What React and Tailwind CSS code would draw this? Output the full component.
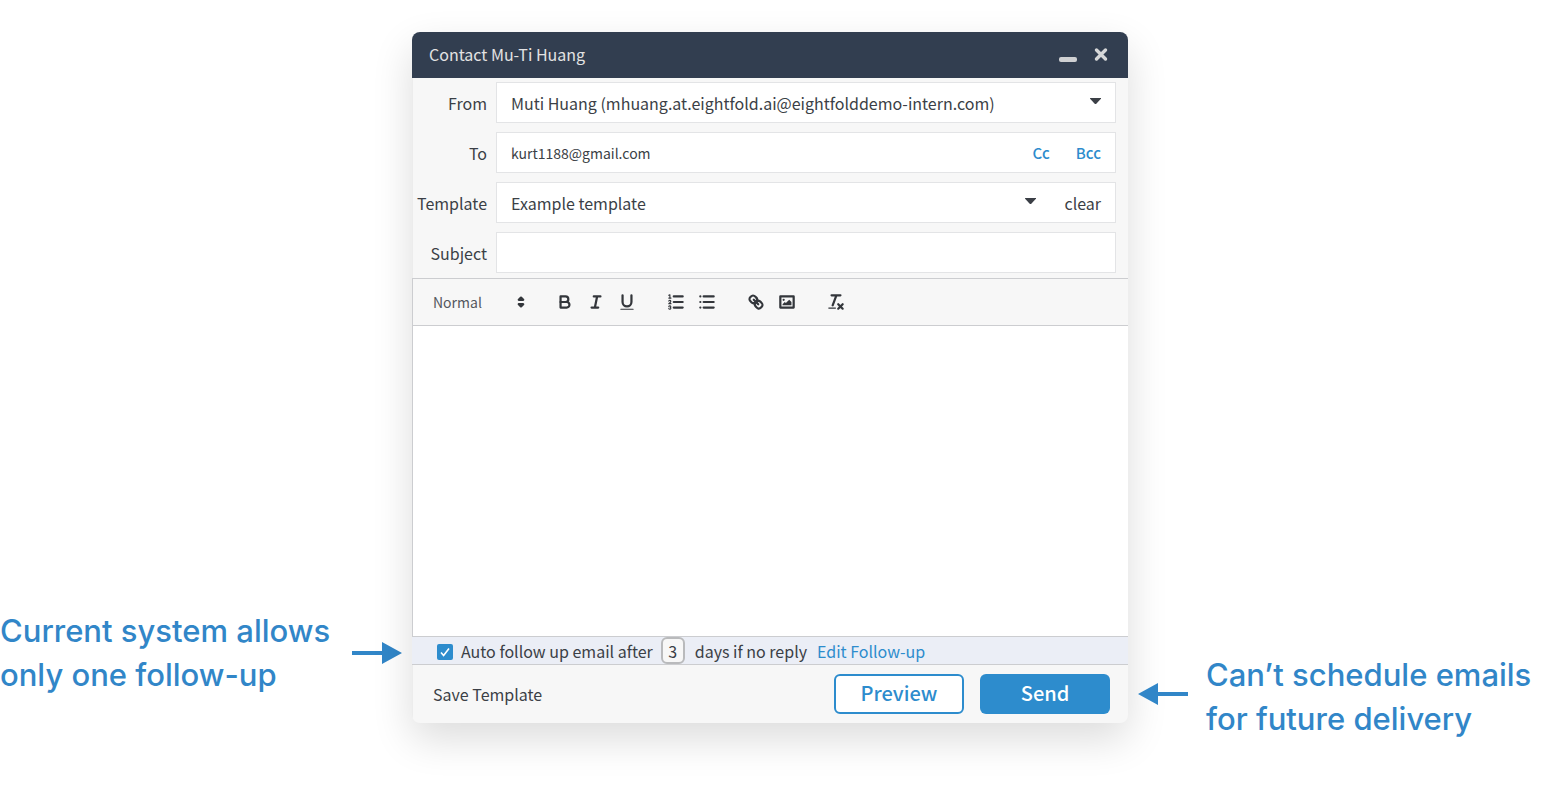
const toolbarGroups = [
  ['Bold', 'Italic', 'Underline'],
  ['Ordered list', 'Bullet list'],
  ['Link', 'Image'],
  ['Clear formatting'],
]

const iconShapes = {
  Bold: (
    <>
      <path d="M5,4H9.5A2.5,2.5,0,0,1,12,6.5v0A2.5,2.5,0,0,1,9.5,9H5V4Z" />
      <path d="M5,9h5.5A2.5,2.5,0,0,1,13,11.5v0A2.5,2.5,0,0,1,10.5,14H5V9Z" />
    </>
  ),
  Italic: <path d="M7 4h6M5 14h6M8 14l2-10" />,
  Underline: (
    <>
      <path d="M5,3V9a4,4,0,0,0,8,0V3" />
      <rect x="3" y="15" width="12" height="1" rx="0.5" fill="currentColor" stroke="none" />
    </>
  ),
  'Ordered list': (
    <>
      <path d="M7 4h8M7 9h8M7 14h8" />
      <path
        strokeWidth="1"
        d="M2.5 5.5h2M2.5 3l1-.5v3M4.5,10.5h-2c0-.234,1.85-1.076,1.85-2.234A0.959,0.959,0,0,0,2.5,8.156M2.5,14.846a0.959,0.959,0,0,0,1.85-.109A0.7,0.7,0,0,0,3.75,14a0.688,0.688,0,0,0,.6-0.736,0.959,0.959,0,0,0-1.85-.109"
      />
    </>
  ),
  'Bullet list': <path d="M6 4h9M6 9h9M6 14h9M3 4h.01M3 9h.01M3 14h.01" />,
  Link: (
    <>
      <path d="M7 7l4 4" />
      <path d="M8.9,4.577a3.476,3.476,0,0,1,.36,4.679A3.476,3.476,0,0,1,4.577,8.9C3.185,7.5,2.035,6.4,4.217,4.217S7.5,3.185,8.9,4.577Z" />
      <path d="M13.423,9.1a3.476,3.476,0,0,0-4.679-.36,3.476,3.476,0,0,0,.36,4.679c1.392,1.392,2.5,2.542,4.679.36S14.815,10.5,13.423,9.1Z" />
    </>
  ),
  Image: (
    <>
      <rect x="3" y="4" width="12" height="10" />
      <circle cx="6" cy="7" r="1" fill="currentColor" stroke="none" />
      <path d="M5 12v-1l2-2 1 1 3-3 2 2v3z" fill="currentColor" stroke="none" />
    </>
  ),
  'Clear formatting': (
    <>
      <path d="M5 3h8M6 12l3.35-9M11 11l4 4M15 11l-4 4" />
      <rect x="2" y="14" width="7" height="1" rx="0.5" fill="currentColor" stroke="none" />
    </>
  ),
}

function ToolbarIcon({ name }) {
  return (
    <svg
      viewBox="0 0 18 18"
      className="size-5"
      fill="none"
      stroke="currentColor"
      strokeWidth="2"
      strokeLinecap="round"
      strokeLinejoin="round"
    >
      {iconShapes[name]}
    </svg>
  )
}

function Caret() {
  return (
    <svg viewBox="0 0 12 9" className="h-[9px] w-3 shrink-0" fill="currentColor">
      <path d="M1.500 0h10q1 0 .4.800L7.300 5.700q-.8.800-1.600 0L1.100.8Q.5 0 1.500 0z" />
    </svg>
  )
}

function Arrow({ className }) {
  return (
    <svg viewBox="0 0 50 24" className={`h-6 w-[50px] shrink-0 ${className}`} fill="#3186c8">
      <path d="M0 10h30V1l20 11-20 11v-9H0z" />
    </svg>
  )
}

function FieldRow({ label, id, children }) {
  return (
    <div className="flex items-center">
      <label htmlFor={id} className="w-[75px] shrink-0 pr-px text-right">
        {label}
      </label>
      <div className="ml-2 flex min-h-[41px] min-w-0 flex-1 items-center border border-[#e3e4e6] bg-white px-3.5">
        {children}
      </div>
    </div>
  )
}

function Toolbar() {
  return (
    <div className="flex h-12 items-center border-y border-l border-[#cccdd0] bg-[#f7f7f7] pl-5 text-[#33363b]">
      <div className="relative flex w-[98px] items-center">
        <select
          aria-label="Text style"
          className="w-full appearance-none bg-transparent text-[14px] leading-5 text-[#54585e] outline-none"
        >
          <option>Normal</option>
        </select>
        <svg
          viewBox="0 0 18 18"
          className="pointer-events-none absolute right-0 size-5"
          fill="currentColor"
          stroke="currentColor"
          strokeWidth="2"
          strokeLinejoin="round"
        >
          <path d="M7 11l2 2 2-2zM7 7l2-2 2 2z" />
        </svg>
      </div>
      <div className="ml-6 flex gap-[29px]">
        {toolbarGroups.map((group) => (
          <div key={group[0]} className="flex gap-[11px]">
            {group.map((name) => (
              <button key={name} type="button" aria-label={name}>
                <ToolbarIcon name={name} />
              </button>
            ))}
          </div>
        ))}
      </div>
    </div>
  )
}

function ContactDialog() {
  return (
    <section className="mb-[18px] w-[716px] shrink-0 overflow-hidden rounded-lg bg-[#f7f7f7] text-[16px] leading-6 text-[#3b3f46] shadow-[0_16px_40px_rgba(0,0,0,0.14)]">
      <header className="flex h-[46px] items-center bg-[#323e50] pr-[19px] pb-0.5 pl-[17px] text-[#e3e3e3]">
        <h1 className="flex-1">Contact Mu-Ti Huang</h1>
        <button type="button" aria-label="Minimize">
          <svg viewBox="0 0 18 18" className="size-[18px]" fill="#cfd0d2">
            <rect y="12" width="18" height="5" rx="2" />
          </svg>
        </button>
        <button type="button" aria-label="Close" className="ml-4">
          <svg
            viewBox="0 0 16 16"
            className="size-4"
            stroke="#d6d7d8"
            strokeWidth="3.4"
            strokeLinecap="round"
          >
            <path d="M3.500 4l9 9M12.500 4l-9 9" />
          </svg>
        </button>
      </header>

      <form>
        <div className="flex flex-col gap-[9px] border-l border-[#ececec] pt-1 pr-3 pb-[5px]">
          <FieldRow label="From" id="from">
            <select id="from" className="min-w-0 flex-1 appearance-none outline-none">
              <option>Muti Huang (mhuang.at.eightfold.ai@eightfolddemo-intern.com)</option>
            </select>
            <Caret />
          </FieldRow>
          <FieldRow label="To" id="to">
            <input
              id="to"
              type="email"
              defaultValue="kurt1188@gmail.com"
              className="min-w-0 flex-1 text-[14px] outline-none"
            />
            <button type="button" className="text-[15px] font-medium text-[#2d8ccd]">
              Cc
            </button>
            <button type="button" className="ml-[26px] text-[15px] font-medium text-[#2d8ccd]">
              Bcc
            </button>
          </FieldRow>
          <FieldRow label="Template" id="template">
            <select id="template" className="min-w-0 flex-1 appearance-none outline-none">
              <option>Example template</option>
            </select>
            <Caret />
            <button type="button" className="ml-7">
              clear
            </button>
          </FieldRow>
          <FieldRow label="Subject" id="subject">
            <input id="subject" type="text" className="min-w-0 flex-1 outline-none" />
          </FieldRow>
        </div>

        <Toolbar />
        <textarea
          aria-label="Message"
          className="block h-[310px] w-full resize-none border-l border-[#cccdd0] bg-white p-4 outline-none"
        />

        <div className="flex h-[29px] items-center border-y border-[#cccdd0] bg-[#ebeef6] pl-[25px]">
          <label className="flex items-center">
            <input type="checkbox" defaultChecked className="peer sr-only" />
            <svg viewBox="0 0 16 16" className="mt-0.5 mr-2 size-4" fill="none">
              <rect width="16" height="16" rx="2" fill="#2d8ccd" />
              <path d="M4 8.500l2.600 3L12 4.500" stroke="#fff" strokeWidth="1.600" />
            </svg>
            Auto follow up email after
          </label>
          <input
            aria-label="Days before follow-up"
            type="text"
            defaultValue="3"
            className="mr-2.5 ml-2 h-[27px] w-6 rounded-md border-2 border-[#b9babc] bg-[#f7f7f7] text-center outline-none"
          />
          <span>days if no reply</span>
          <a href="#follow-up" className="ml-2.5 text-[#2d8ccd]">
            Edit Follow-up
          </a>
        </div>

        <footer className="flex items-start border-l border-[#ececec] pt-[9px] pr-[18px] pb-[9px] pl-5">
          <button type="button" className="mt-2 mr-auto">
            Save Template
          </button>
          <button
            type="button"
            className="h-10 w-[130px] rounded-md border-2 border-[#2d8ccd] bg-white pb-0.5 text-[20px] font-medium text-[#2d8ccd]"
          >
            Preview
          </button>
          <button
            type="button"
            className="ml-4 h-10 w-[130px] rounded-md bg-[#2d8ccd] pb-0.5 text-[20px] font-medium text-white"
          >
            Send
          </button>
        </footer>
      </form>
    </section>
  )
}

export default function App() {
  return (
    <main className="flex min-h-screen items-start bg-white font-['Noto_Sans_CJK_SC','Noto_Sans',sans-serif]">
      <div className="flex flex-1 items-end pt-8 pr-1">
        <div className="mb-11 flex flex-1 items-center justify-between pr-2.5 font-['Inter',sans-serif] text-[31px] leading-11 font-medium text-[#3186c8]">
          <p className="whitespace-nowrap">
            Current system allows
            <br />
            only one follow-up
          </p>
          <Arrow className="" />
        </div>
        <ContactDialog />
        <div className="flex flex-1 items-center gap-[18px] pl-2.5 font-['Inter',sans-serif] text-[31px] leading-11 font-medium text-[#3186c8]">
          <Arrow className="mb-1.5 rotate-180" />
          <p className="whitespace-nowrap">
            Can’t schedule emails
            <br />
            for future delivery
          </p>
        </div>
      </div>
    </main>
  )
}
